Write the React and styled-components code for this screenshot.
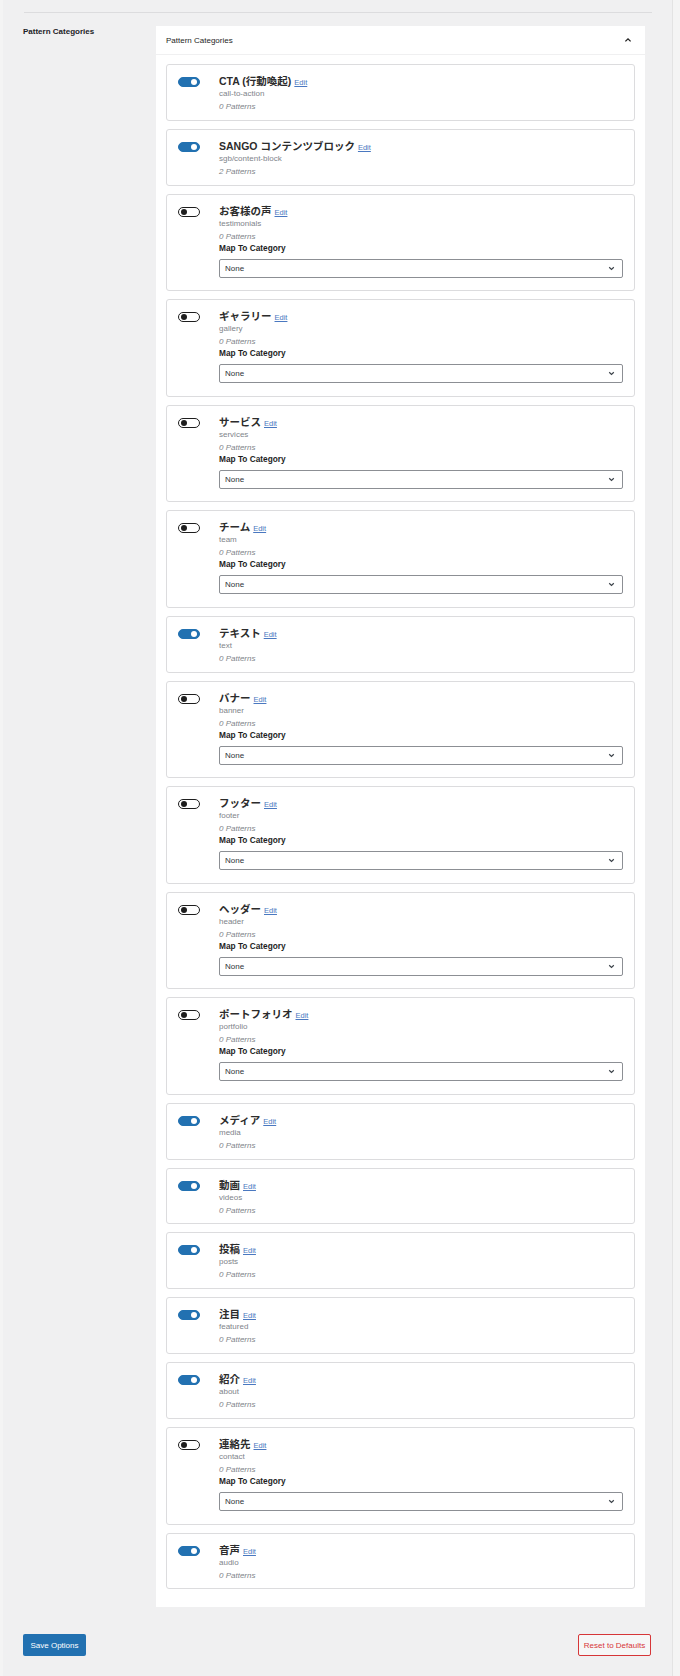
import React from "react";
import styled, { createGlobalStyle } from "styled-components";

const categories = [
  { name: "CTA (行動喚起)", slug: "call-to-action", count: 0, enabled: true },
  { name: "SANGO コンテンツブロック", slug: "sgb/content-block", count: 2, enabled: true },
  { name: "お客様の声", slug: "testimonials", count: 0, enabled: false },
  { name: "ギャラリー", slug: "gallery", count: 0, enabled: false },
  { name: "サービス", slug: "services", count: 0, enabled: false },
  { name: "チーム", slug: "team", count: 0, enabled: false },
  { name: "テキスト", slug: "text", count: 0, enabled: true },
  { name: "バナー", slug: "banner", count: 0, enabled: false },
  { name: "フッター", slug: "footer", count: 0, enabled: false },
  { name: "ヘッダー", slug: "header", count: 0, enabled: false },
  { name: "ポートフォリオ", slug: "portfolio", count: 0, enabled: false },
  { name: "メディア", slug: "media", count: 0, enabled: true },
  { name: "動画", slug: "videos", count: 0, enabled: true },
  { name: "投稿", slug: "posts", count: 0, enabled: true },
  { name: "注目", slug: "featured", count: 0, enabled: true },
  { name: "紹介", slug: "about", count: 0, enabled: true },
  { name: "連絡先", slug: "contact", count: 0, enabled: false },
  { name: "音声", slug: "audio", count: 0, enabled: true },
];

function CategoryCard({ category }) {
  return (
    <Card>
      <Toggle $on={category.enabled}>
        <Knob $on={category.enabled} />
      </Toggle>
      <Info>
        <TitleRow>
          <Title>{category.name}</Title>
          <EditLink href="#">Edit</EditLink>
        </TitleRow>
        <Slug>{category.slug}</Slug>
        <Count>{category.count} Patterns</Count>
        {!category.enabled && (
          <>
            <MapLabel>Map To Category</MapLabel>
            <SelectBox>
              <span>None</span>
              <svg width="7" height="5" viewBox="0 0 7 5">
                <path d="M1.2 1.3 L3.5 3.5 L5.8 1.3" fill="none" stroke="#3c434a" strokeWidth="1.2" />
              </svg>
            </SelectBox>
          </>
        )}
      </Info>
    </Card>
  );
}

function App() {
  return (
    <>
      <GlobalStyle />
      <Main>
        <Divider />
        <SettingRow>
          <RowLabel>Pattern Categories</RowLabel>
          <Panel>
            <PanelHeader>
              <PanelTitle>Pattern Categories</PanelTitle>
              <svg width="8" height="6" viewBox="0 0 8 6">
                <path d="M1.4 4.4 L4 1.9 L6.6 4.4" fill="none" stroke="#1e1e1e" strokeWidth="1.3" />
              </svg>
            </PanelHeader>
            <CardList>
              {categories.map((category) => (
                <CategoryCard key={category.slug} category={category} />
              ))}
            </CardList>
          </Panel>
        </SettingRow>
        <Footer>
          <SaveButton>Save Options</SaveButton>
          <ResetButton>Reset to Defaults</ResetButton>
        </Footer>
      </Main>
    </>
  );
}

export default App;

const GlobalStyle = createGlobalStyle`
  body {
    margin: 0;
    background: #f4f4f4;
    font-family: "Liberation Sans", "Noto Sans CJK JP", sans-serif;
    color: #1e1e1e;
  }
`;

const Main = styled.div`
  margin-left: 3px;
  width: 670px;
  min-height: 1676px;
  box-sizing: border-box;
  padding: 12px 20px 0 21px;
  background: #f0f0f1;
  border-right: 1px solid #e3e3e3;
`;

const Divider = styled.div`
  height: 1px;
  background: #dcdcde;
`;

const SettingRow = styled.div`
  display: grid;
  grid-template-columns: 132px 489px;
  margin-top: 13px;
`;

const RowLabel = styled.div`
  font-size: 8px;
  font-weight: bold;
  line-height: 12px;
  color: #1d2327;
  margin-left: -1px;
`;

const Panel = styled.div`
  background: #fff;
`;

const PanelHeader = styled.div`
  height: 29px;
  display: flex;
  align-items: center;
  justify-content: space-between;
  padding: 0 13px 0 10px;
  border-bottom: 1px solid #f0f0f1;
  box-sizing: border-box;
`;

const PanelTitle = styled.div`
  font-size: 8px;
  color: #1e1e1e;
  padding-top: 1px;
`;

const CardList = styled.div`
  padding: 9px 10px 10px;
`;

const Card = styled.div`
  display: flex;
  align-items: flex-start;
  border: 1px solid #dcdcde;
  border-radius: 3px;
  padding: 9px 11px 6.85px 11px;
  margin-bottom: 8px;
`;

const Toggle = styled.div`
  position: relative;
  width: 22px;
  height: 10px;
  margin-top: 3px;
  border-radius: 6px;
  box-sizing: border-box;
  background: ${(p) => (p.$on ? "#2271b1" : "#fff")};
  border: 1px solid ${(p) => (p.$on ? "#2271b1" : "#1e1e1e")};
  flex-shrink: 0;
`;

const Knob = styled.span`
  position: absolute;
  top: 1px;
  ${(p) => (p.$on ? "right: 2px;" : "left: 2px;")}
  width: 6px;
  height: 6px;
  border-radius: 50%;
  background: ${(p) => (p.$on ? "#fff" : "#1e1e1e")};
`;

const Info = styled.div`
  flex: 1;
  margin-left: 19px;
`;

const TitleRow = styled.div`
  display: flex;
  align-items: baseline;
  gap: 3px;
  height: 14px;
`;

const Title = styled.span`
  font-size: 10.5px;
  font-weight: 600;
  line-height: 14px;
  color: #2c2c2c;
`;

const EditLink = styled.a`
  font-size: 7.5px;
  color: #4a78c0;
  text-decoration: underline;
`;

const Slug = styled.div`
  font-size: 8px;
  line-height: 12px;
  color: #80848a;
`;

const Count = styled.div`
  font-size: 8px;
  line-height: 12px;
  margin-top: 1px;
  font-style: italic;
  color: #80848a;
`;

const MapLabel = styled.div`
  font-size: 8.3px;
  font-weight: bold;
  line-height: 10px;
  color: #1e1e1e;
`;

const SelectBox = styled.div`
  display: flex;
  align-items: center;
  justify-content: space-between;
  height: 19px;
  box-sizing: border-box;
  margin: 6px 0 5.7px;
  padding: 0 7px 0 5px;
  border: 1px solid #8c8f94;
  border-radius: 2px;
  font-size: 8px;
  color: #2c3338;
`;

const Footer = styled.div`
  display: flex;
  justify-content: space-between;
  align-items: center;
  margin-top: 27px;
  margin-left: -1px;
  margin-right: 1px;
`;

const SaveButton = styled.button`
  height: 22px;
  width: 63px;
  padding: 0;
  border: none;
  border-radius: 2px;
  background: #2271b1;
  color: #fff;
  font-family: "Liberation Sans", sans-serif;
  font-size: 8px;
`;

const ResetButton = styled.button`
  height: 22px;
  width: 73px;
  padding: 0;
  border: 1px solid #d63638;
  border-radius: 2px;
  background: #f6f7f7;
  color: #d63638;
  font-family: "Liberation Sans", sans-serif;
  font-size: 8px;
`;
